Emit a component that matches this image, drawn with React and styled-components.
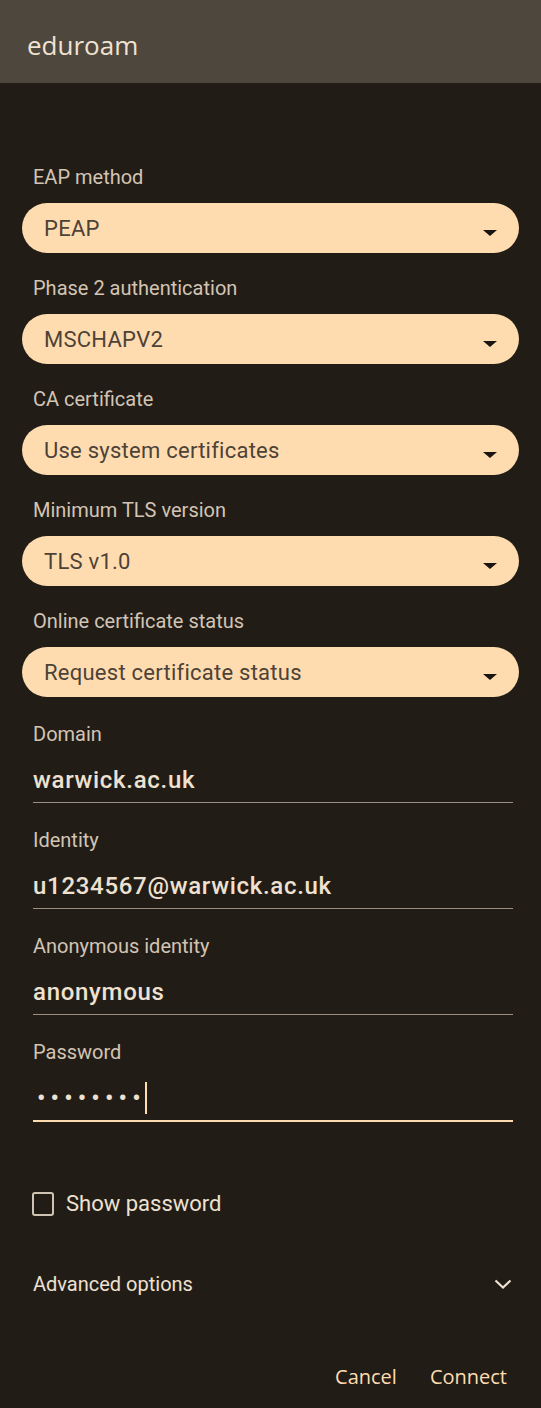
import React from 'react'
import styled, { createGlobalStyle } from 'styled-components'

const Global = createGlobalStyle`
  body{
    margin:0;
    background:#211d16;
    font-family:Roboto, "Liberation Sans", sans-serif;
  }
`;

const Wrap = styled.div`
  width:541px;
  min-height:1408px;
  background:#211d16;
  display:flex;
  flex-direction:column;
`;

const Header = styled.div`
  height:83px;
  background:#4e473d;
  display:flex;
  align-items:center;
  padding:7px 0 0 27px;
  box-sizing:border-box;
  font-family:"Open Sans", sans-serif;
  font-size:26px;
  color:#f1e2d2;
`;

const Body = styled.div`
  padding:82px 22px 0 22px;
  display:flex;
  flex-direction:column;
`;

const Label = styled.div`
  font-size:20px;
  line-height:24px;
  color:#d3c4b4;
  padding-left:11px;
`;

const SelectGroup = styled.div`
  display:flex;
  flex-direction:column;
  gap:14px;
  margin-bottom:23px;
`;

const Select = styled.div`
  height:50px;
  border-radius:25px;
  background:#ffdcb0;
  display:flex;
  align-items:center;
  justify-content:space-between;
  padding:0 22px 0 22px;
  font-size:22px;
  letter-spacing:0.25px;
  color:#4d4237;
`;

const Arrow = styled.div`
  width:0;
  height:0;
  border-left:7px solid transparent;
  border-right:7px solid transparent;
  border-top:6px solid #1a1510;
  margin-top:10px;
`;

const FieldGroup = styled.div`
  display:flex;
  flex-direction:column;
  margin:2px 6px 23px 0;
`;

const Value = styled.div`
  margin:18px 0 0 11px;
  height:32px;
  padding-bottom:6px;
  font-size:24px;
  font-weight:500;
  letter-spacing:0.7px;
  color:#efe1d1;
  border-bottom:${p => p.active ? '2px solid #ffdcb0' : '1px solid #9a8f80'};
  display:flex;
  align-items:center;
`;

const Dots = styled.span`
  letter-spacing:5.2px;
  padding-left:4px;
`;

const Caret = styled.span`
  width:2px;
  height:32px;
  background:#ffdcb0;
  margin-left:-1px;
`;

const CheckRow = styled.label`
  display:flex;
  align-items:center;
  gap:12px;
  margin:46px 0 0 10px;
  font-size:22px;
  line-height:26px;
  color:#efe1d1;
`;

const Box = styled.span`
  width:18px;
  height:20px;
  border:2px solid #cfc4b3;
  border-radius:3px;
`;

const Advanced = styled.div`
  display:flex;
  justify-content:space-between;
  align-items:center;
  height:24px;
  margin:55px 6px 0 11px;
  font-size:20px;
  color:#efe1d1;
`;

const Actions = styled.div`
  display:flex;
  justify-content:flex-end;
  gap:33px;
  margin:67px 12px 0 0;
`;

const TextButton = styled.button`
  background:none;
  border:none;
  padding:0;
  font-family:"Open Sans", sans-serif;
  font-size:20px;
  color:#ffdcb0;
`;

const selects = [
  ['EAP method', 'PEAP'],
  ['Phase 2 authentication', 'MSCHAPV2'],
  ['CA certificate', 'Use system certificates'],
  ['Minimum TLS version', 'TLS v1.0'],
  ['Online certificate status', 'Request certificate status'],
];

const fields = [
  ['Domain', 'warwick.ac.uk'],
  ['Identity', 'u1234567@warwick.ac.uk'],
  ['Anonymous identity', 'anonymous'],
];

function App() {
  return (
    <Wrap>
      <Global />
      <Header>eduroam</Header>
      <Body>
        {selects.map(([label, value]) => (
          <SelectGroup key={label}>
            <Label>{label}</Label>
            <Select>
              {value}
              <Arrow />
            </Select>
          </SelectGroup>
        ))}
        {fields.map(([label, value]) => (
          <FieldGroup key={label}>
            <Label>{label}</Label>
            <Value>{value}</Value>
          </FieldGroup>
        ))}
        <FieldGroup>
          <Label>Password</Label>
          <Value active>
            <Dots>••••••••</Dots>
            <Caret />
          </Value>
        </FieldGroup>
        <CheckRow>
          <Box />
          Show password
        </CheckRow>
        <Advanced>
          Advanced options
          <svg width="20" height="20" viewBox="0 0 20 20">
            <path d="M2.5 6.5L10 13.5L17.5 6.5" fill="none" stroke="#efe1d1" strokeWidth="2.2" />
          </svg>
        </Advanced>
        <Actions>
          <TextButton>Cancel</TextButton>
          <TextButton>Connect</TextButton>
        </Actions>
      </Body>
    </Wrap>
  )
}

export default App
